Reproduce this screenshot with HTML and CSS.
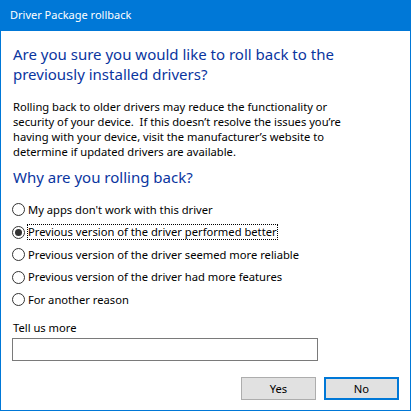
FILE: index.html
```html
<!DOCTYPE html>
<html>
<head>
<meta charset="utf-8">
<link rel="stylesheet" href="styles.css">
</head>
<body>
<div class="window">
  <div class="titlebar">Driver Package rollback</div>
  <div class="content">
    <h1 class="instruction">Are you sure you would like to roll back to the previously installed drivers?</h1>
    <p class="desc">Rolling back to older drivers may reduce the functionality or security of your device.&nbsp; If this doesn’t resolve the issues you’re having with your device, visit the manufacturer’s website to determine if updated drivers are available.</p>
    <h2 class="subhead">Why are you rolling back?</h2>
    <div class="options">
      <div class="option"><span class="radio"></span><span class="label">My apps don't work with this driver</span></div>
      <div class="option"><span class="radio checked"></span><span class="label focused">Previous version of the driver performed better</span></div>
      <div class="option"><span class="radio"></span><span class="label">Previous version of the driver seemed more reliable</span></div>
      <div class="option"><span class="radio"></span><span class="label">Previous version of the driver had more features</span></div>
      <div class="option"><span class="radio"></span><span class="label">For another reason</span></div>
    </div>
    <div class="more-label">Tell us more</div>
    <div class="textbox"></div>
    <div class="buttons">
      <div class="btn">Yes</div>
      <div class="btn default">No</div>
    </div>
  </div>
</div>
</body>
</html>
```
FILE: styles.css
```css
html, body {
  margin: 0;
  padding: 0;
  background: #ffffff;
}
body {
  font-family: "Segoe UI", "Noto Sans", "Open Sans", sans-serif;
  font-size: 11.2px;
  color: #000000;
}
.window {
  width: 411px;
  height: 411px;
  box-sizing: border-box;
  border: 1px solid #0078d7;
  border-top: none;
  background: #ffffff;
  display: flex;
  flex-direction: column;
}
.titlebar {
  height: 31px;
  line-height: 30px;
  background: #0078d7;
  color: #ffffff;
  padding-left: 9px;
  font-size: 11px;
}
.content {
  padding: 0 11px 0 11px;
  display: flex;
  flex-direction: column;
}
.instruction {
  margin: 13px 0 0 1px;
  width: 370px;
  font-size: 15px;
  font-weight: normal;
  line-height: 20px;
  color: #0a35a0;
}
.desc {
  margin: 15px 0 0 1px;
  width: 348px;
  line-height: 15px;
  font-size: 11.2px;
}
.subhead {
  margin: 8px 0 0 1px;
  font-size: 15px;
  font-weight: normal;
  line-height: 20px;
  color: #0a35a0;
}
.options {
  margin-top: 11.5px;
  display: flex;
  flex-direction: column;
}
.option {
  height: 22.5px;
  display: flex;
  align-items: center;
}
.radio {
  width: 13px;
  height: 13px;
  box-sizing: border-box;
  border: 1px solid #333333;
  border-radius: 50%;
  background: #ffffff;
  position: relative;
  flex: none;
}
.radio.checked::after {
  content: "";
  position: absolute;
  left: 2px;
  top: 2px;
  width: 7px;
  height: 7px;
  border-radius: 50%;
  background: #333333;
}
.label {
  margin-left: 2px;
  padding: 0;
  line-height: 14px;
  border: 1px dotted transparent;
}
.label.focused {
  border-color: #000000;
}
.more-label {
  margin-top: 9.25px;
  margin-left: 1px;
  line-height: 15px;
}
.textbox {
  margin-top: 2.5px;
  width: 306px;
  height: 23px;
  box-sizing: border-box;
  border: 1px solid #7a7a7a;
  background: #ffffff;
}
.buttons {
  margin-top: 16px;
  display: flex;
  justify-content: flex-end;
  gap: 8px;
}
.btn {
  width: 75px;
  height: 23px;
  box-sizing: border-box;
  border: 1px solid #adadad;
  background: #e1e1e1;
  display: flex;
  align-items: center;
  justify-content: center;
  font-size: 11.2px;
}
.btn.default {
  border: 2px solid #0078d7;
}
```
